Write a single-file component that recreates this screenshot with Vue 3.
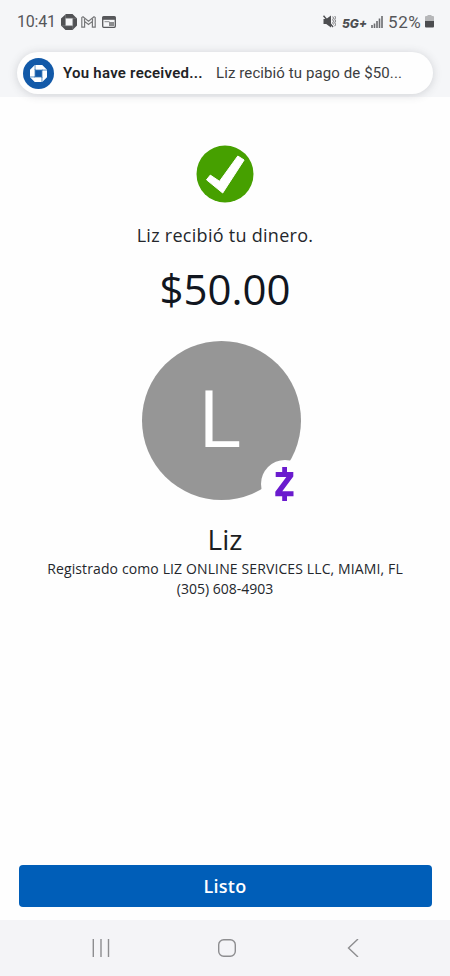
<script setup>
const title = 'You have received...'
const message = 'Liz recibió tu pago de $50...'
</script>

<template>
  <div class="screen">
    <header class="top">
      <div class="status">
        <span class="clock">10:41</span>
        <svg class="s-chase" viewBox="0 0 32 32">
          <path d="M10 0h13l9 9v14l-9 9H9l-9-9V9zM9 8.500v15h14.500v-15z" fill="#515255" fill-rule="evenodd" />
          <path d="M9 1v7.500H23M31 8.500h-7.500V23M23.500 31v-7.500H9M1 23.500h8V9" fill="none" stroke="#8b8c8e" stroke-width="1" />
        </svg>
        <svg class="s-mail" viewBox="0 0 15 12">
          <path d="M.8 11.2V1.500L2 .8l5.500 4.400L13 .8l1.200.7v9.700h-2.800V5.400L7.500 8.500 3.600 5.400v5.800z" />
          <path d="M3.500 5.200V2.500M11.500 5.200V2.500" />
        </svg>
        <svg class="s-cal" viewBox="0 0 14 12">
          <rect x=".7" y=".7" width="12.600" height="10.600" rx="1" fill="none" stroke="#57585b" stroke-width="1.3" />
          <path d="M.5.8h13v3H.5z" fill="#57585b" />
          <path d="M2.500 5.700h5" stroke="#8b8c8e" />
          <path d="M7 6h5v4H7z" fill="#8b8c8e" />
        </svg>
        <span class="grow"></span>
        <svg class="s-mute" viewBox="0 0 13 13">
          <path d="M.5 4h2.700L8 .5v12L3.200 9H.5z" fill="#4d4e51" />
          <path d="M.5.8L10 12" stroke="#4d4e51" stroke-width="1.4" />
          <path d="M9.700 1.500l.8 1.600-.8 1.600.8 1.600-.8 1.600.8 1.600M11.800 1l.7 1.700-.7 1.600.7 1.700-.7 1.700.7 1.700-.7 1.800" fill="none" stroke="#66676a" stroke-width=".9" />
        </svg>
        <span class="net">5G+</span>
        <svg class="s-signal" viewBox="0 0 12 12">
          <path d="M1 12V9M3.500 12V7.500M6 12V5M8.500 12V2.500M11 12V0" stroke="#6a6b6e" stroke-width="1.6" />
        </svg>
        <span class="pct">52%</span>
        <svg class="s-batt" viewBox="0 0 9 13">
          <path d="M2.500 0h4v1H8q1 0 1 1V6H0V2q0-1 1-1h1.500z" fill="#b6b7b9" />
          <path d="M0 6h9v5.500q0 1-1 1H1q-1 0-1-1z" fill="#4c4d50" />
        </svg>
      </div>
      <div class="pill">
        <div class="brand">
          <svg viewBox="0 0 32 32">
            <path d="M9 0h14l9 9v14l-9 9H9l-9-9V9zM9.500 9.500v13h13v-13z" fill="#fff" fill-rule="evenodd" />
            <path d="M9.500 0v9.500H24M32 9.500h-9.500V24M22.500 32v-9.500H8M0 22.500h9.500V8" fill="none" stroke="#3978b7" stroke-width="1.5" />
          </svg>
        </div>
        <span class="title">{{ title }}</span>
        <span class="msg">{{ message }}</span>
      </div>
    </header>

    <main class="body">
      <svg class="check" viewBox="0 0 58 58">
        <circle cx="29" cy="29" r="28.500" fill="#46a000" />
        <path d="M10.500 34.800l3.800-4.700 9.200 6.200L41.800 11l6.300 4L26.700 48z" fill="#fff" stroke="#fff" stroke-width="1" stroke-linejoin="round" />
      </svg>
      <p class="status-text">Liz recibió tu dinero.</p>
      <p class="amount">$50.00</p>
      <div class="avatar">
        <span class="initial">L</span>
        <div class="badge">
          <svg viewBox="0 0 19 34">
            <path d="M.7 5h17.600v4.500L7.300 24.300h11.200v5H.3v-4.500L11.300 10H.7z" />
            <path d="M7.200 0h4.800v6H7.200zM7.200 28h4.800v6H7.200z" />
          </svg>
        </div>
      </div>
      <h1 class="name">Liz</h1>
      <p class="detail reg">Registrado como LIZ ONLINE SERVICES LLC, MIAMI, FL</p>
      <p class="detail phone">(305) 608-4903</p>
      <button class="done">Listo</button>
    </main>

    <nav class="nav">
      <svg viewBox="0 0 18 18"><path d="M1.300 0v18M9 0v18M16.500 0v18" /></svg>
      <svg viewBox="0 0 18 18"><rect x=".7" y=".7" width="16.600" height="16.600" rx="5" /></svg>
      <svg viewBox="0 0 18 18"><path d="M14 0L4.500 9l9.500 9" /></svg>
    </nav>
  </div>
</template>

<style>
body { margin: 0; background: #fff; }
</style>

<style scoped>
.screen {
  width: 450px;
  height: 976px;
  display: flex;
  flex-direction: column;
  background: #fefefe;
  overflow: hidden;
  font-family: "Open Sans", "Noto Sans", sans-serif;
  color: #24272c;
}
p, h1 { margin: 0; font-weight: 400; white-space: nowrap; }
svg { display: block; flex: none; }
.top {
  height: 97px;
  flex: none;
  background: #f5f6f8;
  font-family: Roboto, sans-serif;
}
.status {
  height: 52px;
  box-sizing: border-box;
  padding: 0 16px 9px 17px;
  display: flex;
  align-items: center;
  color: #55565a;
}
.clock { font-size: 16px; width: 44px; letter-spacing: -0.2px; }
.s-chase { width: 16px; height: 16px; }
.s-mail { width: 15px; height: 12px; margin-left: 4px; fill: none; stroke: #77787a; stroke-width: 1.2; }
.s-cal { width: 14px; height: 12px; margin-left: 6px; }
.grow { flex: 1; }
.s-mute { width: 13px; height: 13px; }
.net { width: 29px; margin-left: 6px; padding-top: 3px; font: italic 800 12px Inter, sans-serif; color: #4d4e51; }
.s-signal { width: 12px; height: 12px; }
.pct { font-size: 17px; width: 37px; margin-left: 5px; letter-spacing: 0.6px; }
.s-batt { width: 9px; height: 13px; }
.pill {
  width: 416px;
  height: 42px;
  margin-left: 17px;
  box-sizing: border-box;
  padding-left: 6px;
  border-radius: 21px;
  background: #fefefe;
  display: flex;
  align-items: center;
  white-space: nowrap;
  box-shadow: 0 1px 10px rgba(60, 65, 75, .2);
}
.brand {
  width: 31px;
  height: 31px;
  border-radius: 50%;
  background: #1259a8;
  display: grid;
  place-items: center;
}
.brand svg { width: 17px; height: 17px; }
.title { margin-left: 9px; width: 153px; font-size: 15px; font-weight: 600; letter-spacing: 0.25px; color: #222326; }
.msg { font-size: 15px; letter-spacing: 0.1px; color: #3c3d40; }
.body {
  flex: 1;
  display: flex;
  flex-direction: column;
  align-items: center;
  padding-top: 48px;
}
.check { width: 58px; height: 58px; }
.status-text { font-size: 18px; line-height: 24px; margin-top: 20px; letter-spacing: 0.28px; }
.amount { font-size: 42px; line-height: 56px; margin-top: 14px; color: #11161f; }
.avatar {
  width: 159px;
  height: 159px;
  margin: 24px 8px 0 0;
  border-radius: 50%;
  background: #969696;
  display: flex;
  align-items: center;
  justify-content: center;
  position: relative;
}
.initial {
  font-size: 78px;
  line-height: 108px;
  padding: 0 3px 7px 0;
  color: #fff;
  transform: scaleX(1.08);
}
.badge {
  position: absolute;
  left: 119px;
  top: 119px;
  width: 48px;
  height: 48px;
  border-radius: 50%;
  background: #fefefe;
  display: grid;
  place-items: center;
}
.badge svg { width: 19px; height: 34px; fill: #6a1bce; }
.name { font-size: 28px; line-height: 36px; margin-top: 21px; color: #1b1d21; }
.detail { font-size: 14px; line-height: 20px; }
.reg { margin-top: 2px; letter-spacing: 0.12px; }
.done {
  width: 413px;
  height: 42px;
  margin: auto 0 13px;
  padding: 0;
  border: 0;
  border-radius: 4px;
  background: #005eb8;
  color: #fff;
  font: 600 18px "Open Sans", "Noto Sans", sans-serif;
  letter-spacing: 0.3px;
}
.nav {
  height: 56px;
  flex: none;
  box-sizing: border-box;
  padding: 0 88px 0 92px;
  background: #f4f4f7;
  display: flex;
  align-items: center;
  justify-content: space-between;
}
.nav svg { width: 18px; height: 18px; fill: none; stroke: #8d8d90; stroke-width: 1.4; }
</style>
